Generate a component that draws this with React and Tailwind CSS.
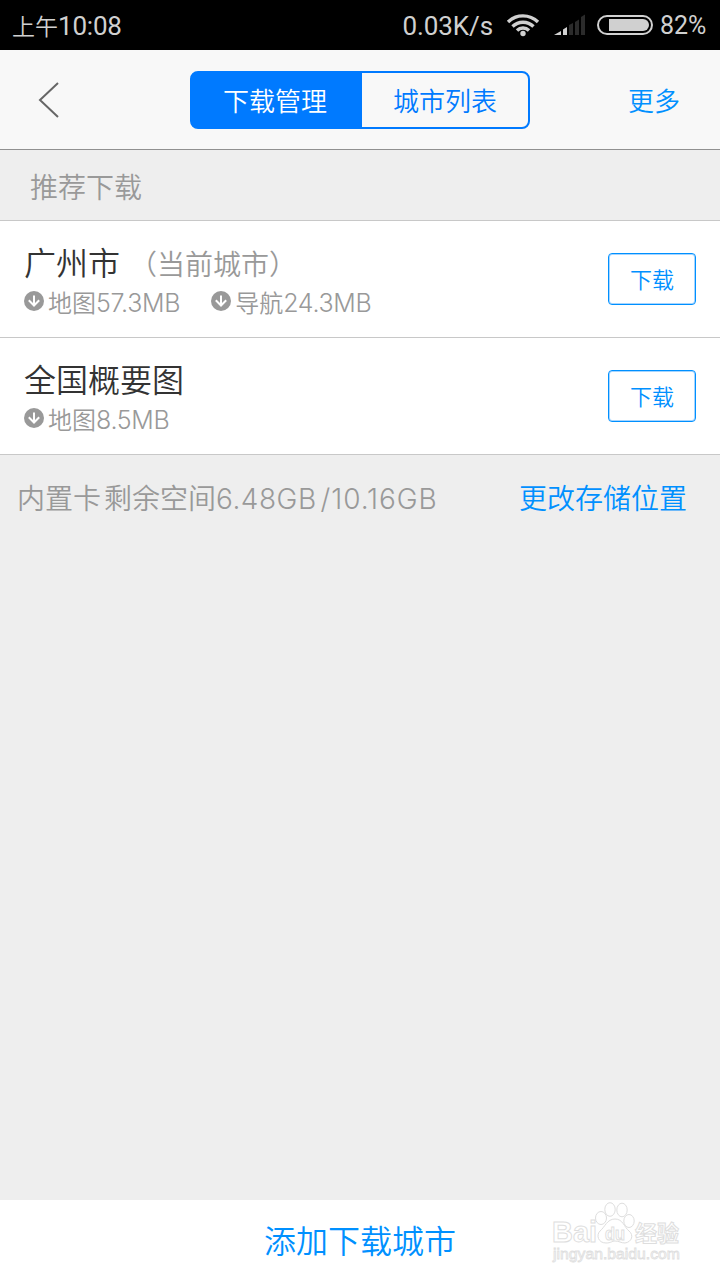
import React from "react";

const cities = [
  {
    id: "guangzhou",
    name: "广州市",
    note: "（当前城市）",
    packages: [
      { label: "地图", size: "57.3MB" },
      { label: "导航", size: "24.3MB" },
    ],
  },
  {
    id: "overview",
    name: "全国概要图",
    packages: [{ label: "地图", size: "8.5MB" }],
  },
];

const SignalIcon = () => (
  <svg width="32" height="22" viewBox="0 0 32 22" className="ml-[14px]">
    <path d="M0 21 L7 17 V21 Z" fill="#d0d0d0" />
    <path d="M9 15.5 L13 13 V21 H9 Z" fill="#d0d0d0" />
    <path d="M15 11 L19 9 V21 H15 Z" fill="#2b2b2b" />
    <path d="M21 8 L25 5.5 V21 H21 Z" fill="#2b2b2b" />
    <path d="M27 3 L31 0.5 V21 H27 Z" fill="#2b2b2b" />
  </svg>
);

const WifiIcon = () => (
  <svg width="34" height="24" viewBox="0 0 34 24" fill="none" stroke="#d0d0d0" strokeWidth="3.4" className="ml-[13px]">
    <path d="M2 9 A21.5 21.5 0 0 1 32 9" />
    <path d="M6.5 13.5 A15 15 0 0 1 27.5 13.5" />
    <path d="M11 17.5 A8.5 8.5 0 0 1 23 17.5" />
    <circle cx="17" cy="20.5" r="2.7" fill="#d0d0d0" stroke="none" />
  </svg>
);

const BatteryIcon = () => (
  <svg width="56" height="20" viewBox="0 0 56 20" className="ml-[11px]">
    <rect x="1" y="1" width="54" height="18" rx="9" fill="none" stroke="#d0d0d0" strokeWidth="2" />
    <path d="M12 4 H46 A6 6 0 0 1 46 16 H12 Z" fill="#d0d0d0" />
  </svg>
);

const DownIcon = () => (
  <svg width="20" height="20" viewBox="0 0 20 20" fill="none" className="mr-1 -mt-[5px]">
    <circle cx="10" cy="10" r="10" fill="#999" />
    <path d="M10 4.5 V14.5 M4.8 9.3 L10 14.5 L15.2 9.3" stroke="#fff" strokeWidth="2" />
  </svg>
);

function StatusBar() {
  return (
    <div className="flex h-[50px] shrink-0 items-center bg-black px-3 font-normal text-[#d0d0d0]">
      <span className="pt-1 text-[23px] font-[350]">上午</span>
      <span className="w-[64px] whitespace-nowrap pt-[3px] font-['Roboto',sans-serif] text-[26px] tracking-[-0.2px]">10:08</span>
      <span className="ml-auto pt-[3px] font-['Roboto',sans-serif] text-[26px] tracking-[-0.1px]">0.03K/s</span>
      <WifiIcon />
      <SignalIcon />
      <BatteryIcon />
      <span className="ml-[7px] w-[48px] pt-0.5 font-['Roboto',sans-serif] text-[25px]">82%</span>
    </div>
  );
}

function Header() {
  return (
    <header className="flex h-[100px] shrink-0 items-center border-b border-[#909090] bg-[#f8f8f8]">
      <button type="button" aria-label="返回" className="ml-[38px] w-[152px]">
        <svg width="22" height="38" viewBox="0 0 22 38" fill="none" stroke="#666" strokeWidth="2">
          <path d="M20 2 L2 19 L20 36" />
        </svg>
      </button>
      <div className="flex h-[58px] w-[340px] overflow-hidden rounded-lg border-2 border-[#007aff] bg-[linear-gradient(to_right,#007aff_50%,transparent_50%)] text-[26px]">
        <button type="button" className="w-[170px] bg-[#007aff] pr-1 pt-[3px] text-white">
          下载管理
        </button>
        <button type="button" className="flex-1 pt-[3px] text-[#007aff]">
          城市列表
        </button>
      </div>
      <button type="button" className="ml-auto mr-10 pt-[3px] text-[26px] text-[#0090ff]">
        更多
      </button>
    </header>
  );
}

function CityRow({ city }) {
  return (
    <li className="flex h-[117px] items-center justify-between border-b border-[#c8c8c8] bg-white px-6">
      <div className="pt-[9px]">
        <div className="flex h-[40px] items-center">
          <span className="text-[32px] text-[#333]">{city.name}</span>
          {city.note && <span className="ml-[9px] pt-[3px] text-[28px] text-[#999]">{city.note}</span>}
        </div>
        <div className="flex h-[40px] items-center gap-[31px] text-[24px] text-[#999]">
          {city.packages.map((p) => (
            <span key={p.label} className="flex items-center">
              <DownIcon />
              {p.label}
              <span className="pt-px font-light text-[25px] tracking-[-0.3px]">{p.size}</span>
            </span>
          ))}
        </div>
      </div>
      <button
        type="button"
        className="h-[52px] w-[88px] rounded border-[1.5px] border-[#0090ff] pt-0.5 text-[22px] text-[#0090ff] shadow-[inset_0_0_0_1px_#a6d5ff]"
      >
        下载
      </button>
    </li>
  );
}

// faint outlined logo in the bottom right corner
function Watermark() {
  return (
    <svg
      width="140"
      height="70"
      viewBox="0 0 140 70"
      className="absolute right-[32px] top-0"
      fill="#fff"
      stroke="#dedede"
      strokeWidth="1"
      fontFamily="'Liberation Sans', 'Noto Sans CJK SC', sans-serif"
      fontWeight="700"
    >
      <text x="4" y="42" fontSize="30" textLength="45" lengthAdjust="spacingAndGlyphs">Bai</text>
      <ellipse cx="53" cy="18" rx="5.5" ry="6.5" />
      <ellipse cx="62" cy="9.5" rx="5.2" ry="6.8" />
      <ellipse cx="74" cy="10" rx="5.2" ry="6.8" />
      <ellipse cx="81" cy="21" rx="5.2" ry="6.5" />
      <path d="M67 19 C59 19 57 27 52 31 C48 35 50 43 58 43 C63 43 64 41 67 41 C71 41 73 43 77 43 C84 42 86 35 81 31 C76 27 75 19 67 19 Z" />
      <text x="57" y="40" fontSize="19" textLength="20" lengthAdjust="spacingAndGlyphs">du</text>
      <text x="87" y="41" fontSize="22" textLength="44">经验</text>
      <text x="5" y="59" fontSize="15" fontWeight="400" strokeWidth="0.8" textLength="127" lengthAdjust="spacingAndGlyphs">jingyan.baidu.com</text>
    </svg>
  );
}

export default function App() {
  return (
    <div className="flex h-[1280px] w-[720px] flex-col overflow-hidden bg-[#eee] font-['Inter','Noto_Sans_CJK_SC',sans-serif] font-[350]">
      <StatusBar />
      <Header />
      <h2 className="flex h-[71px] shrink-0 items-center border-b border-[#c8c8c8] pl-[30px] pt-1.5 text-[28px] text-[#999]">
        推荐下载
      </h2>
      <ul>
        {cities.map((city) => (
          <CityRow key={city.id} city={city} />
        ))}
      </ul>
      <div className="flex h-[84px] items-center pl-[17px] pr-[33px] pt-[3px] text-[28px]">
        <span className="text-[#999]">内置卡</span>
        <span className="ml-[3px] text-[#999]">剩余空间</span>
        <span className="font-light tracking-[0.5px] text-[#999]">6.48GB</span>
        <span className="ml-1 font-light tracking-[0.9px] text-[#999]">/10.16GB</span>
        <button type="button" className="ml-auto text-[#0090ff]">
          更改存储位置
        </button>
      </div>
      <footer className="relative mt-auto flex h-20 items-center justify-center bg-white pt-1">
        <button type="button" className="text-[32px] text-[#0090ff]">
          添加下载城市
        </button>
        <Watermark />
      </footer>
    </div>
  );
}
